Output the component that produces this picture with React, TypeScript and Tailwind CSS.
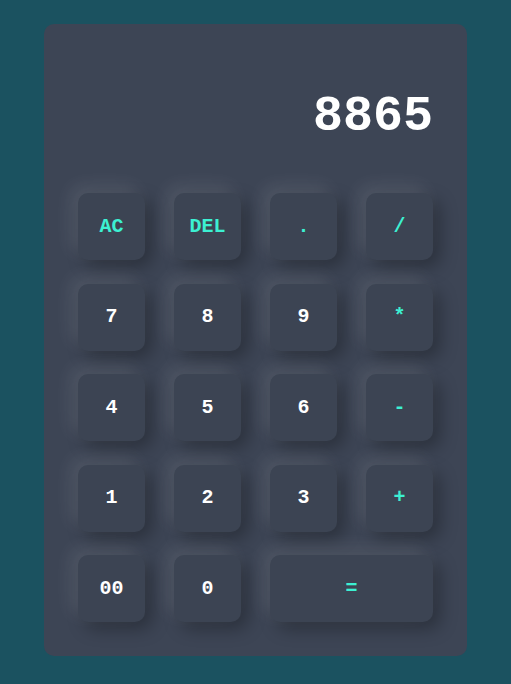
import { useState } from "react"

const keys: { label: string; accent?: boolean; wide?: boolean }[] = [
  { label: "AC", accent: true },
  { label: "DEL", accent: true },
  { label: ".", accent: true },
  { label: "/", accent: true },
  { label: "7" },
  { label: "8" },
  { label: "9" },
  { label: "*", accent: true },
  { label: "4" },
  { label: "5" },
  { label: "6" },
  { label: "-", accent: true },
  { label: "1" },
  { label: "2" },
  { label: "3" },
  { label: "+", accent: true },
  { label: "00" },
  { label: "0" },
  { label: "=", accent: true, wide: true },
]

export default function App() {
  const [value, setValue] = useState("8865")

  const press = (k: string) => {
    if (k === "AC") return setValue("")
    if (k === "DEL") return setValue(v => v.slice(0, -1))
    if (k === "=") {
      try {
        // eslint-disable-next-line no-new-func
        setValue(String(Function(`return (${value})`)()))
      } catch {
        setValue("Error")
      }
      return
    }
    setValue(v => v + k)
  }

  return (
    <div className="min-h-screen bg-[#1b5260] pt-6 font-['Liberation_Mono',monospace]">
      <div className="mx-auto w-[423px] h-[632px] rounded-[10px] bg-[#3d4555] flex flex-col">
        <div className="h-[169px] flex items-center justify-end px-[34px] pt-[16px]">
          <span className="text-[50px] leading-none font-bold text-white">{value}</span>
        </div>
        <div className="grid grid-cols-4 gap-x-[29px] gap-y-[23.5px] px-[34px]">
          {keys.map(k => (
            <button
              key={k.label}
              onClick={() => press(k.label)}
              className={`h-[67px] rounded-[10px] bg-[#3c4453] text-xl font-bold shadow-[-7px_-7px_18px_rgba(255,255,255,0.1),7px_7px_18px_rgba(0,0,0,0.3)] ${
                k.wide ? "col-span-2" : ""
              } ${k.accent ? "text-[#3cf0d2]" : "text-white"}`}
            >
              {k.label}
            </button>
          ))}
        </div>
      </div>
    </div>
  )
}
